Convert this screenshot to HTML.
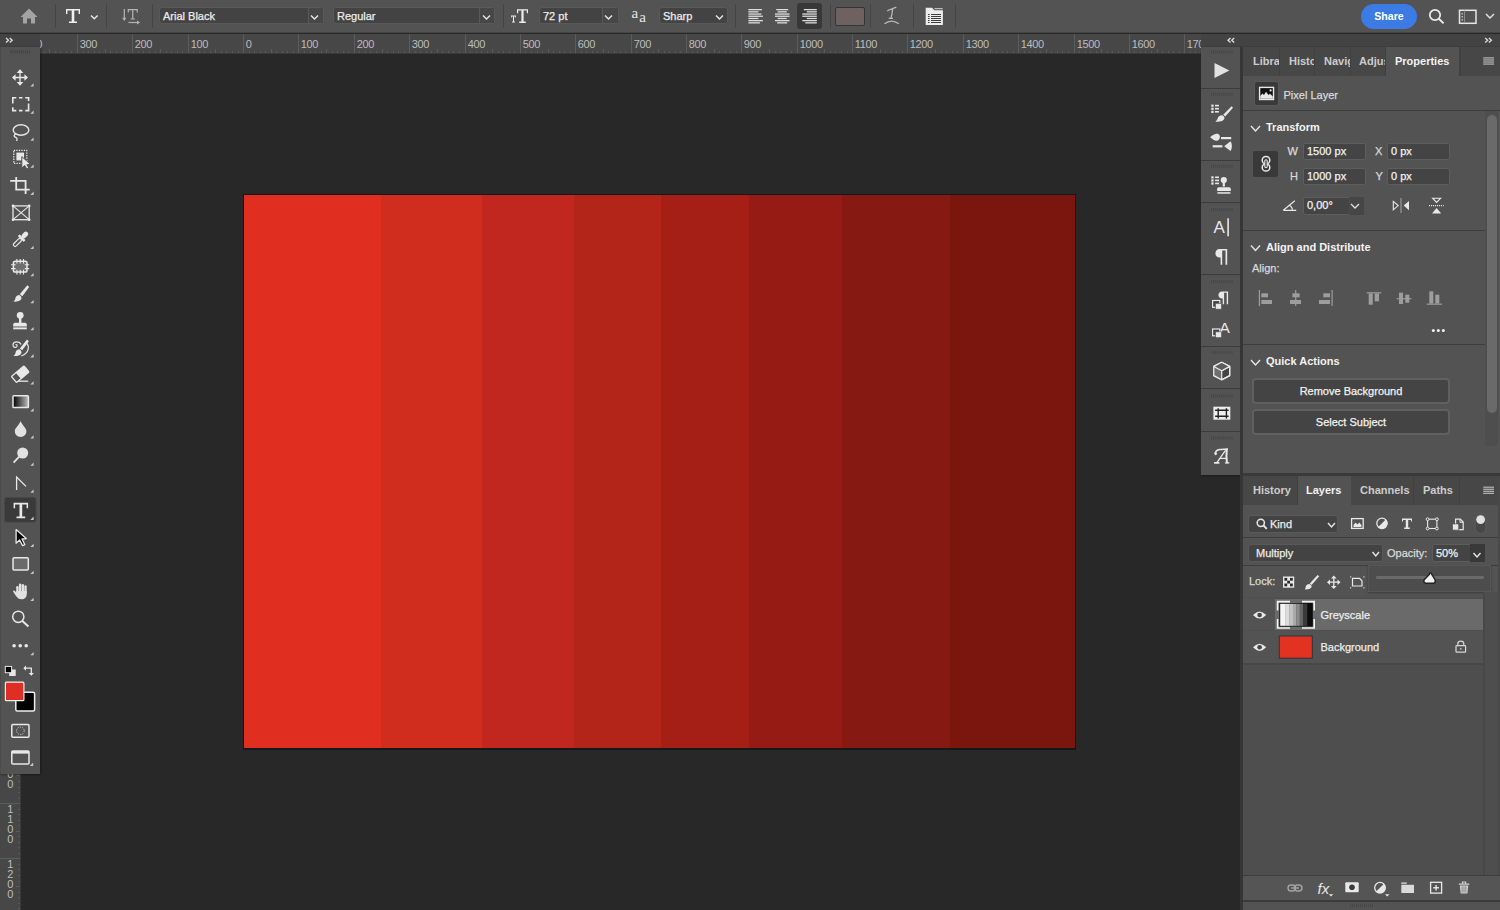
<!DOCTYPE html>
<html><head><meta charset="utf-8">
<style>
*{box-sizing:border-box;margin:0;padding:0}
html,body{width:1500px;height:910px;overflow:hidden;background:#282828;font-family:"Liberation Sans",sans-serif;color:#e6e6e6}
.a{position:absolute}
#top{left:0;top:0;width:1500px;height:33px;background:#535353;border-bottom:1px solid #444}
.sep{position:absolute;top:4px;width:1px;height:24px;background:#444}
.dd{position:absolute;top:7px;height:17px;background:#434343;border:1px solid #595959;border-radius:3px;font-size:11px;line-height:16px;padding-left:3px;color:#ececec}
.dd .chev{position:absolute;top:0;right:0;height:15px;border-left:1px solid #595959;background:#474747}
svg{display:block}
.dd,.lbl,.inp,.btn{-webkit-text-stroke:0.25px currentColor}
.rt text{font-size:11px;letter-spacing:-0.4px;fill:#bdbdbd;font-family:"Liberation Sans",sans-serif}
#hdrL{left:0;top:34px;width:40px;height:13px;background:#434343;border-bottom:1px solid #3e3e3e}
#tools{left:0;top:47px;width:40px;height:727px;background:#535353;box-shadow:1px 1px 2px rgba(0,0,0,.35);border-left:1px solid #4b4b4b}
#dockhdr{left:1201px;top:34px;width:299px;height:13px;background:#434343;border-bottom:1px solid #3e3e3e}
#dock{left:1201px;top:47px;width:40px;height:428px;background:#535353;box-shadow:1px 1px 2px rgba(0,0,0,.35)}
.dg{position:absolute;left:0;width:40px;border-bottom:1px solid #3c3c3c}
#pleft{left:1240px;top:47px;width:3px;height:863px;background:#363636}
#props{left:1243px;top:47px;width:257px;height:426px;background:#535353}
#layers{left:1243px;top:476px;width:257px;height:434px;background:#535353}
.tabs{position:absolute;left:0;top:0;width:257px;height:29px;background:#464646}
.tab{position:absolute;top:0;height:29px;font-size:11px;font-weight:bold;line-height:29px;color:#cccccc;overflow:hidden;white-space:nowrap;border-right:1px solid #404040}
.tab.on{background:#535353;color:#f2f2f2;border-right:none}
.hl{position:absolute;left:0;width:257px;height:1px;background:#3d3d3d}
.sec{position:absolute;left:23px;font-size:11px;font-weight:bold;color:#f2f2f2}
.lbl{position:absolute;font-size:11px;color:#dadada}
.inp{position:absolute;height:17px;background:#444444;border:1px solid #5d5d5d;border-radius:2px;font-size:11px;line-height:15px;padding-left:3px;color:#f2f2f2}
.btn{position:absolute;left:10px;width:198px;height:26px;background:#444444;border:2px solid #606060;border-radius:4px;font-size:11px;line-height:22px;text-align:center;color:#f2f2f2}
</style></head><body>

<!-- canvas area -->
<div class="a" style="left:243px;top:194px;width:833px;height:556px;background:#13191b"></div>
<div style="position:absolute;left:244px;top:195px;width:137px;height:553px;background:#e02f20"></div><div style="position:absolute;left:381px;top:195px;width:101px;height:553px;background:#d12d1e"></div><div style="position:absolute;left:482px;top:195px;width:92px;height:553px;background:#c1261f"></div><div style="position:absolute;left:574px;top:195px;width:87px;height:553px;background:#b32419"></div><div style="position:absolute;left:661px;top:195px;width:88px;height:553px;background:#a61f16"></div><div style="position:absolute;left:749px;top:195px;width:93px;height:553px;background:#951b14"></div><div style="position:absolute;left:842px;top:195px;width:108px;height:553px;background:#861912"></div><div style="position:absolute;left:950px;top:195px;width:125px;height:553px;background:#7b160e"></div>

<!-- rulers -->
<div class="a" style="left:0;top:34px;width:1201px;height:19px;background:#474747"></div>
<div class="a" style="left:0;top:53px;width:20px;height:857px;background:#474747"></div>
<div class="a" style="left:20px;top:53px;width:1px;height:857px;background:#3a3a3a"></div>
<div class="a" style="left:0;top:53px;width:1201px;height:1px;background:#3a3a3a"></div>
<svg class="a rt" style="left:0;top:0" width="1201" height="910"><rect x="0" y="51" width="1" height="2" fill="#595959"/><rect x="5" y="51" width="1" height="2" fill="#595959"/><rect x="11" y="51" width="1" height="2" fill="#595959"/><rect x="16" y="51" width="1" height="2" fill="#595959"/><rect x="22" y="34" width="1" height="19" fill="#5c5c5c"/><text x="24.8" y="47.8">400</text><rect x="27" y="51" width="1" height="2" fill="#595959"/><rect x="33" y="51" width="1" height="2" fill="#595959"/><rect x="38" y="51" width="1" height="2" fill="#595959"/><rect x="44" y="51" width="1" height="2" fill="#595959"/><rect x="49" y="49" width="1" height="4" fill="#5a5a5a"/><rect x="55" y="51" width="1" height="2" fill="#595959"/><rect x="60" y="51" width="1" height="2" fill="#595959"/><rect x="66" y="51" width="1" height="2" fill="#595959"/><rect x="71" y="51" width="1" height="2" fill="#595959"/><rect x="77" y="34" width="1" height="19" fill="#5c5c5c"/><text x="79.8" y="47.8">300</text><rect x="83" y="51" width="1" height="2" fill="#595959"/><rect x="88" y="51" width="1" height="2" fill="#595959"/><rect x="94" y="51" width="1" height="2" fill="#595959"/><rect x="99" y="51" width="1" height="2" fill="#595959"/><rect x="105" y="49" width="1" height="4" fill="#5a5a5a"/><rect x="110" y="51" width="1" height="2" fill="#595959"/><rect x="116" y="51" width="1" height="2" fill="#595959"/><rect x="121" y="51" width="1" height="2" fill="#595959"/><rect x="127" y="51" width="1" height="2" fill="#595959"/><rect x="132" y="34" width="1" height="19" fill="#5c5c5c"/><text x="134.8" y="47.8">200</text><rect x="138" y="51" width="1" height="2" fill="#595959"/><rect x="143" y="51" width="1" height="2" fill="#595959"/><rect x="149" y="51" width="1" height="2" fill="#595959"/><rect x="155" y="51" width="1" height="2" fill="#595959"/><rect x="160" y="49" width="1" height="4" fill="#5a5a5a"/><rect x="166" y="51" width="1" height="2" fill="#595959"/><rect x="171" y="51" width="1" height="2" fill="#595959"/><rect x="177" y="51" width="1" height="2" fill="#595959"/><rect x="182" y="51" width="1" height="2" fill="#595959"/><rect x="188" y="34" width="1" height="19" fill="#5c5c5c"/><text x="190.8" y="47.8">100</text><rect x="193" y="51" width="1" height="2" fill="#595959"/><rect x="199" y="51" width="1" height="2" fill="#595959"/><rect x="204" y="51" width="1" height="2" fill="#595959"/><rect x="210" y="51" width="1" height="2" fill="#595959"/><rect x="215" y="49" width="1" height="4" fill="#5a5a5a"/><rect x="221" y="51" width="1" height="2" fill="#595959"/><rect x="226" y="51" width="1" height="2" fill="#595959"/><rect x="232" y="51" width="1" height="2" fill="#595959"/><rect x="238" y="51" width="1" height="2" fill="#595959"/><rect x="243" y="34" width="1" height="19" fill="#5c5c5c"/><text x="245.8" y="47.8">0</text><rect x="249" y="51" width="1" height="2" fill="#595959"/><rect x="254" y="51" width="1" height="2" fill="#595959"/><rect x="260" y="51" width="1" height="2" fill="#595959"/><rect x="265" y="51" width="1" height="2" fill="#595959"/><rect x="271" y="49" width="1" height="4" fill="#5a5a5a"/><rect x="276" y="51" width="1" height="2" fill="#595959"/><rect x="282" y="51" width="1" height="2" fill="#595959"/><rect x="287" y="51" width="1" height="2" fill="#595959"/><rect x="293" y="51" width="1" height="2" fill="#595959"/><rect x="298" y="34" width="1" height="19" fill="#5c5c5c"/><text x="300.8" y="47.8">100</text><rect x="304" y="51" width="1" height="2" fill="#595959"/><rect x="310" y="51" width="1" height="2" fill="#595959"/><rect x="315" y="51" width="1" height="2" fill="#595959"/><rect x="321" y="51" width="1" height="2" fill="#595959"/><rect x="326" y="49" width="1" height="4" fill="#5a5a5a"/><rect x="332" y="51" width="1" height="2" fill="#595959"/><rect x="337" y="51" width="1" height="2" fill="#595959"/><rect x="343" y="51" width="1" height="2" fill="#595959"/><rect x="348" y="51" width="1" height="2" fill="#595959"/><rect x="354" y="34" width="1" height="19" fill="#5c5c5c"/><text x="356.8" y="47.8">200</text><rect x="359" y="51" width="1" height="2" fill="#595959"/><rect x="365" y="51" width="1" height="2" fill="#595959"/><rect x="370" y="51" width="1" height="2" fill="#595959"/><rect x="376" y="51" width="1" height="2" fill="#595959"/><rect x="382" y="49" width="1" height="4" fill="#5a5a5a"/><rect x="387" y="51" width="1" height="2" fill="#595959"/><rect x="393" y="51" width="1" height="2" fill="#595959"/><rect x="398" y="51" width="1" height="2" fill="#595959"/><rect x="404" y="51" width="1" height="2" fill="#595959"/><rect x="409" y="34" width="1" height="19" fill="#5c5c5c"/><text x="411.8" y="47.8">300</text><rect x="415" y="51" width="1" height="2" fill="#595959"/><rect x="420" y="51" width="1" height="2" fill="#595959"/><rect x="426" y="51" width="1" height="2" fill="#595959"/><rect x="431" y="51" width="1" height="2" fill="#595959"/><rect x="437" y="49" width="1" height="4" fill="#5a5a5a"/><rect x="442" y="51" width="1" height="2" fill="#595959"/><rect x="448" y="51" width="1" height="2" fill="#595959"/><rect x="453" y="51" width="1" height="2" fill="#595959"/><rect x="459" y="51" width="1" height="2" fill="#595959"/><rect x="465" y="34" width="1" height="19" fill="#5c5c5c"/><text x="467.8" y="47.8">400</text><rect x="470" y="51" width="1" height="2" fill="#595959"/><rect x="476" y="51" width="1" height="2" fill="#595959"/><rect x="481" y="51" width="1" height="2" fill="#595959"/><rect x="487" y="51" width="1" height="2" fill="#595959"/><rect x="492" y="49" width="1" height="4" fill="#5a5a5a"/><rect x="498" y="51" width="1" height="2" fill="#595959"/><rect x="503" y="51" width="1" height="2" fill="#595959"/><rect x="509" y="51" width="1" height="2" fill="#595959"/><rect x="514" y="51" width="1" height="2" fill="#595959"/><rect x="520" y="34" width="1" height="19" fill="#5c5c5c"/><text x="522.8" y="47.8">500</text><rect x="525" y="51" width="1" height="2" fill="#595959"/><rect x="531" y="51" width="1" height="2" fill="#595959"/><rect x="537" y="51" width="1" height="2" fill="#595959"/><rect x="542" y="51" width="1" height="2" fill="#595959"/><rect x="548" y="49" width="1" height="4" fill="#5a5a5a"/><rect x="553" y="51" width="1" height="2" fill="#595959"/><rect x="559" y="51" width="1" height="2" fill="#595959"/><rect x="564" y="51" width="1" height="2" fill="#595959"/><rect x="570" y="51" width="1" height="2" fill="#595959"/><rect x="575" y="34" width="1" height="19" fill="#5c5c5c"/><text x="577.8" y="47.8">600</text><rect x="581" y="51" width="1" height="2" fill="#595959"/><rect x="586" y="51" width="1" height="2" fill="#595959"/><rect x="592" y="51" width="1" height="2" fill="#595959"/><rect x="597" y="51" width="1" height="2" fill="#595959"/><rect x="603" y="49" width="1" height="4" fill="#5a5a5a"/><rect x="608" y="51" width="1" height="2" fill="#595959"/><rect x="614" y="51" width="1" height="2" fill="#595959"/><rect x="620" y="51" width="1" height="2" fill="#595959"/><rect x="625" y="51" width="1" height="2" fill="#595959"/><rect x="631" y="34" width="1" height="19" fill="#5c5c5c"/><text x="633.8" y="47.8">700</text><rect x="636" y="51" width="1" height="2" fill="#595959"/><rect x="642" y="51" width="1" height="2" fill="#595959"/><rect x="647" y="51" width="1" height="2" fill="#595959"/><rect x="653" y="51" width="1" height="2" fill="#595959"/><rect x="658" y="49" width="1" height="4" fill="#5a5a5a"/><rect x="664" y="51" width="1" height="2" fill="#595959"/><rect x="669" y="51" width="1" height="2" fill="#595959"/><rect x="675" y="51" width="1" height="2" fill="#595959"/><rect x="680" y="51" width="1" height="2" fill="#595959"/><rect x="686" y="34" width="1" height="19" fill="#5c5c5c"/><text x="688.8" y="47.8">800</text><rect x="692" y="51" width="1" height="2" fill="#595959"/><rect x="697" y="51" width="1" height="2" fill="#595959"/><rect x="703" y="51" width="1" height="2" fill="#595959"/><rect x="708" y="51" width="1" height="2" fill="#595959"/><rect x="714" y="49" width="1" height="4" fill="#5a5a5a"/><rect x="719" y="51" width="1" height="2" fill="#595959"/><rect x="725" y="51" width="1" height="2" fill="#595959"/><rect x="730" y="51" width="1" height="2" fill="#595959"/><rect x="736" y="51" width="1" height="2" fill="#595959"/><rect x="741" y="34" width="1" height="19" fill="#5c5c5c"/><text x="743.8" y="47.8">900</text><rect x="747" y="51" width="1" height="2" fill="#595959"/><rect x="752" y="51" width="1" height="2" fill="#595959"/><rect x="758" y="51" width="1" height="2" fill="#595959"/><rect x="763" y="51" width="1" height="2" fill="#595959"/><rect x="769" y="49" width="1" height="4" fill="#5a5a5a"/><rect x="775" y="51" width="1" height="2" fill="#595959"/><rect x="780" y="51" width="1" height="2" fill="#595959"/><rect x="786" y="51" width="1" height="2" fill="#595959"/><rect x="791" y="51" width="1" height="2" fill="#595959"/><rect x="797" y="34" width="1" height="19" fill="#5c5c5c"/><text x="799.8" y="47.8">1000</text><rect x="802" y="51" width="1" height="2" fill="#595959"/><rect x="808" y="51" width="1" height="2" fill="#595959"/><rect x="813" y="51" width="1" height="2" fill="#595959"/><rect x="819" y="51" width="1" height="2" fill="#595959"/><rect x="824" y="49" width="1" height="4" fill="#5a5a5a"/><rect x="830" y="51" width="1" height="2" fill="#595959"/><rect x="835" y="51" width="1" height="2" fill="#595959"/><rect x="841" y="51" width="1" height="2" fill="#595959"/><rect x="847" y="51" width="1" height="2" fill="#595959"/><rect x="852" y="34" width="1" height="19" fill="#5c5c5c"/><text x="854.8" y="47.8">1100</text><rect x="858" y="51" width="1" height="2" fill="#595959"/><rect x="863" y="51" width="1" height="2" fill="#595959"/><rect x="869" y="51" width="1" height="2" fill="#595959"/><rect x="874" y="51" width="1" height="2" fill="#595959"/><rect x="880" y="49" width="1" height="4" fill="#5a5a5a"/><rect x="885" y="51" width="1" height="2" fill="#595959"/><rect x="891" y="51" width="1" height="2" fill="#595959"/><rect x="896" y="51" width="1" height="2" fill="#595959"/><rect x="902" y="51" width="1" height="2" fill="#595959"/><rect x="907" y="34" width="1" height="19" fill="#5c5c5c"/><text x="909.8" y="47.8">1200</text><rect x="913" y="51" width="1" height="2" fill="#595959"/><rect x="918" y="51" width="1" height="2" fill="#595959"/><rect x="924" y="51" width="1" height="2" fill="#595959"/><rect x="930" y="51" width="1" height="2" fill="#595959"/><rect x="935" y="49" width="1" height="4" fill="#5a5a5a"/><rect x="941" y="51" width="1" height="2" fill="#595959"/><rect x="946" y="51" width="1" height="2" fill="#595959"/><rect x="952" y="51" width="1" height="2" fill="#595959"/><rect x="957" y="51" width="1" height="2" fill="#595959"/><rect x="963" y="34" width="1" height="19" fill="#5c5c5c"/><text x="965.8" y="47.8">1300</text><rect x="968" y="51" width="1" height="2" fill="#595959"/><rect x="974" y="51" width="1" height="2" fill="#595959"/><rect x="979" y="51" width="1" height="2" fill="#595959"/><rect x="985" y="51" width="1" height="2" fill="#595959"/><rect x="990" y="49" width="1" height="4" fill="#5a5a5a"/><rect x="996" y="51" width="1" height="2" fill="#595959"/><rect x="1002" y="51" width="1" height="2" fill="#595959"/><rect x="1007" y="51" width="1" height="2" fill="#595959"/><rect x="1013" y="51" width="1" height="2" fill="#595959"/><rect x="1018" y="34" width="1" height="19" fill="#5c5c5c"/><text x="1020.8" y="47.8">1400</text><rect x="1024" y="51" width="1" height="2" fill="#595959"/><rect x="1029" y="51" width="1" height="2" fill="#595959"/><rect x="1035" y="51" width="1" height="2" fill="#595959"/><rect x="1040" y="51" width="1" height="2" fill="#595959"/><rect x="1046" y="49" width="1" height="4" fill="#5a5a5a"/><rect x="1051" y="51" width="1" height="2" fill="#595959"/><rect x="1057" y="51" width="1" height="2" fill="#595959"/><rect x="1062" y="51" width="1" height="2" fill="#595959"/><rect x="1068" y="51" width="1" height="2" fill="#595959"/><rect x="1074" y="34" width="1" height="19" fill="#5c5c5c"/><text x="1076.8" y="47.8">1500</text><rect x="1079" y="51" width="1" height="2" fill="#595959"/><rect x="1085" y="51" width="1" height="2" fill="#595959"/><rect x="1090" y="51" width="1" height="2" fill="#595959"/><rect x="1096" y="51" width="1" height="2" fill="#595959"/><rect x="1101" y="49" width="1" height="4" fill="#5a5a5a"/><rect x="1107" y="51" width="1" height="2" fill="#595959"/><rect x="1112" y="51" width="1" height="2" fill="#595959"/><rect x="1118" y="51" width="1" height="2" fill="#595959"/><rect x="1123" y="51" width="1" height="2" fill="#595959"/><rect x="1129" y="34" width="1" height="19" fill="#5c5c5c"/><text x="1131.8" y="47.8">1600</text><rect x="1134" y="51" width="1" height="2" fill="#595959"/><rect x="1140" y="51" width="1" height="2" fill="#595959"/><rect x="1145" y="51" width="1" height="2" fill="#595959"/><rect x="1151" y="51" width="1" height="2" fill="#595959"/><rect x="1157" y="49" width="1" height="4" fill="#5a5a5a"/><rect x="1162" y="51" width="1" height="2" fill="#595959"/><rect x="1168" y="51" width="1" height="2" fill="#595959"/><rect x="1173" y="51" width="1" height="2" fill="#595959"/><rect x="1179" y="51" width="1" height="2" fill="#595959"/><rect x="1184" y="34" width="1" height="19" fill="#5c5c5c"/><text x="1186.8" y="47.8">1700</text><rect x="1190" y="51" width="1" height="2" fill="#595959"/><rect x="1195" y="51" width="1" height="2" fill="#595959"/><rect x="18" y="51" width="2" height="1" fill="#575757"/><rect x="16" y="57" width="4" height="1" fill="#5a5a5a"/><rect x="18" y="62" width="2" height="1" fill="#575757"/><rect x="18" y="68" width="2" height="1" fill="#575757"/><rect x="18" y="73" width="2" height="1" fill="#575757"/><rect x="18" y="79" width="2" height="1" fill="#575757"/><rect x="0" y="84" width="20" height="1" fill="#5c5c5c"/><text x="10" y="93.5" text-anchor="middle">2</text><text x="10" y="103.5" text-anchor="middle">0</text><text x="10" y="113.5" text-anchor="middle">0</text><rect x="18" y="90" width="2" height="1" fill="#575757"/><rect x="18" y="95" width="2" height="1" fill="#575757"/><rect x="18" y="101" width="2" height="1" fill="#575757"/><rect x="18" y="106" width="2" height="1" fill="#575757"/><rect x="16" y="112" width="4" height="1" fill="#5a5a5a"/><rect x="18" y="117" width="2" height="1" fill="#575757"/><rect x="18" y="123" width="2" height="1" fill="#575757"/><rect x="18" y="128" width="2" height="1" fill="#575757"/><rect x="18" y="134" width="2" height="1" fill="#575757"/><rect x="0" y="140" width="20" height="1" fill="#5c5c5c"/><text x="10" y="149.5" text-anchor="middle">1</text><text x="10" y="159.5" text-anchor="middle">0</text><text x="10" y="169.5" text-anchor="middle">0</text><rect x="18" y="145" width="2" height="1" fill="#575757"/><rect x="18" y="151" width="2" height="1" fill="#575757"/><rect x="18" y="156" width="2" height="1" fill="#575757"/><rect x="18" y="162" width="2" height="1" fill="#575757"/><rect x="16" y="167" width="4" height="1" fill="#5a5a5a"/><rect x="18" y="173" width="2" height="1" fill="#575757"/><rect x="18" y="178" width="2" height="1" fill="#575757"/><rect x="18" y="184" width="2" height="1" fill="#575757"/><rect x="18" y="189" width="2" height="1" fill="#575757"/><rect x="0" y="195" width="20" height="1" fill="#5c5c5c"/><text x="10" y="204.5" text-anchor="middle">0</text><rect x="18" y="200" width="2" height="1" fill="#575757"/><rect x="18" y="206" width="2" height="1" fill="#575757"/><rect x="18" y="211" width="2" height="1" fill="#575757"/><rect x="18" y="217" width="2" height="1" fill="#575757"/><rect x="16" y="222" width="4" height="1" fill="#5a5a5a"/><rect x="18" y="228" width="2" height="1" fill="#575757"/><rect x="18" y="234" width="2" height="1" fill="#575757"/><rect x="18" y="239" width="2" height="1" fill="#575757"/><rect x="18" y="245" width="2" height="1" fill="#575757"/><rect x="0" y="250" width="20" height="1" fill="#5c5c5c"/><text x="10" y="259.5" text-anchor="middle">1</text><text x="10" y="269.5" text-anchor="middle">0</text><text x="10" y="279.5" text-anchor="middle">0</text><rect x="18" y="256" width="2" height="1" fill="#575757"/><rect x="18" y="261" width="2" height="1" fill="#575757"/><rect x="18" y="267" width="2" height="1" fill="#575757"/><rect x="18" y="272" width="2" height="1" fill="#575757"/><rect x="16" y="278" width="4" height="1" fill="#5a5a5a"/><rect x="18" y="283" width="2" height="1" fill="#575757"/><rect x="18" y="289" width="2" height="1" fill="#575757"/><rect x="18" y="294" width="2" height="1" fill="#575757"/><rect x="18" y="300" width="2" height="1" fill="#575757"/><rect x="0" y="305" width="20" height="1" fill="#5c5c5c"/><text x="10" y="314.5" text-anchor="middle">2</text><text x="10" y="324.5" text-anchor="middle">0</text><text x="10" y="334.5" text-anchor="middle">0</text><rect x="18" y="311" width="2" height="1" fill="#575757"/><rect x="18" y="316" width="2" height="1" fill="#575757"/><rect x="18" y="322" width="2" height="1" fill="#575757"/><rect x="18" y="328" width="2" height="1" fill="#575757"/><rect x="16" y="333" width="4" height="1" fill="#5a5a5a"/><rect x="18" y="339" width="2" height="1" fill="#575757"/><rect x="18" y="344" width="2" height="1" fill="#575757"/><rect x="18" y="350" width="2" height="1" fill="#575757"/><rect x="18" y="355" width="2" height="1" fill="#575757"/><rect x="0" y="361" width="20" height="1" fill="#5c5c5c"/><text x="10" y="370.5" text-anchor="middle">3</text><text x="10" y="380.5" text-anchor="middle">0</text><text x="10" y="390.5" text-anchor="middle">0</text><rect x="18" y="366" width="2" height="1" fill="#575757"/><rect x="18" y="372" width="2" height="1" fill="#575757"/><rect x="18" y="377" width="2" height="1" fill="#575757"/><rect x="18" y="383" width="2" height="1" fill="#575757"/><rect x="16" y="388" width="4" height="1" fill="#5a5a5a"/><rect x="18" y="394" width="2" height="1" fill="#575757"/><rect x="18" y="399" width="2" height="1" fill="#575757"/><rect x="18" y="405" width="2" height="1" fill="#575757"/><rect x="18" y="410" width="2" height="1" fill="#575757"/><rect x="0" y="416" width="20" height="1" fill="#5c5c5c"/><text x="10" y="425.5" text-anchor="middle">4</text><text x="10" y="435.5" text-anchor="middle">0</text><text x="10" y="445.5" text-anchor="middle">0</text><rect x="18" y="422" width="2" height="1" fill="#575757"/><rect x="18" y="427" width="2" height="1" fill="#575757"/><rect x="18" y="433" width="2" height="1" fill="#575757"/><rect x="18" y="438" width="2" height="1" fill="#575757"/><rect x="16" y="444" width="4" height="1" fill="#5a5a5a"/><rect x="18" y="449" width="2" height="1" fill="#575757"/><rect x="18" y="455" width="2" height="1" fill="#575757"/><rect x="18" y="460" width="2" height="1" fill="#575757"/><rect x="18" y="466" width="2" height="1" fill="#575757"/><rect x="0" y="471" width="20" height="1" fill="#5c5c5c"/><text x="10" y="480.5" text-anchor="middle">5</text><text x="10" y="490.5" text-anchor="middle">0</text><text x="10" y="500.5" text-anchor="middle">0</text><rect x="18" y="477" width="2" height="1" fill="#575757"/><rect x="18" y="482" width="2" height="1" fill="#575757"/><rect x="18" y="488" width="2" height="1" fill="#575757"/><rect x="18" y="493" width="2" height="1" fill="#575757"/><rect x="16" y="499" width="4" height="1" fill="#5a5a5a"/><rect x="18" y="504" width="2" height="1" fill="#575757"/><rect x="18" y="510" width="2" height="1" fill="#575757"/><rect x="18" y="516" width="2" height="1" fill="#575757"/><rect x="18" y="521" width="2" height="1" fill="#575757"/><rect x="0" y="527" width="20" height="1" fill="#5c5c5c"/><text x="10" y="536.5" text-anchor="middle">6</text><text x="10" y="546.5" text-anchor="middle">0</text><text x="10" y="556.5" text-anchor="middle">0</text><rect x="18" y="532" width="2" height="1" fill="#575757"/><rect x="18" y="538" width="2" height="1" fill="#575757"/><rect x="18" y="543" width="2" height="1" fill="#575757"/><rect x="18" y="549" width="2" height="1" fill="#575757"/><rect x="16" y="554" width="4" height="1" fill="#5a5a5a"/><rect x="18" y="560" width="2" height="1" fill="#575757"/><rect x="18" y="565" width="2" height="1" fill="#575757"/><rect x="18" y="571" width="2" height="1" fill="#575757"/><rect x="18" y="576" width="2" height="1" fill="#575757"/><rect x="0" y="582" width="20" height="1" fill="#5c5c5c"/><text x="10" y="591.5" text-anchor="middle">7</text><text x="10" y="601.5" text-anchor="middle">0</text><text x="10" y="611.5" text-anchor="middle">0</text><rect x="18" y="587" width="2" height="1" fill="#575757"/><rect x="18" y="593" width="2" height="1" fill="#575757"/><rect x="18" y="598" width="2" height="1" fill="#575757"/><rect x="18" y="604" width="2" height="1" fill="#575757"/><rect x="16" y="610" width="4" height="1" fill="#5a5a5a"/><rect x="18" y="615" width="2" height="1" fill="#575757"/><rect x="18" y="621" width="2" height="1" fill="#575757"/><rect x="18" y="626" width="2" height="1" fill="#575757"/><rect x="18" y="632" width="2" height="1" fill="#575757"/><rect x="0" y="637" width="20" height="1" fill="#5c5c5c"/><text x="10" y="646.5" text-anchor="middle">8</text><text x="10" y="656.5" text-anchor="middle">0</text><text x="10" y="666.5" text-anchor="middle">0</text><rect x="18" y="643" width="2" height="1" fill="#575757"/><rect x="18" y="648" width="2" height="1" fill="#575757"/><rect x="18" y="654" width="2" height="1" fill="#575757"/><rect x="18" y="659" width="2" height="1" fill="#575757"/><rect x="16" y="665" width="4" height="1" fill="#5a5a5a"/><rect x="18" y="670" width="2" height="1" fill="#575757"/><rect x="18" y="676" width="2" height="1" fill="#575757"/><rect x="18" y="681" width="2" height="1" fill="#575757"/><rect x="18" y="687" width="2" height="1" fill="#575757"/><rect x="0" y="692" width="20" height="1" fill="#5c5c5c"/><text x="10" y="701.5" text-anchor="middle">9</text><text x="10" y="711.5" text-anchor="middle">0</text><text x="10" y="721.5" text-anchor="middle">0</text><rect x="18" y="698" width="2" height="1" fill="#575757"/><rect x="18" y="704" width="2" height="1" fill="#575757"/><rect x="18" y="709" width="2" height="1" fill="#575757"/><rect x="18" y="715" width="2" height="1" fill="#575757"/><rect x="16" y="720" width="4" height="1" fill="#5a5a5a"/><rect x="18" y="726" width="2" height="1" fill="#575757"/><rect x="18" y="731" width="2" height="1" fill="#575757"/><rect x="18" y="737" width="2" height="1" fill="#575757"/><rect x="18" y="742" width="2" height="1" fill="#575757"/><rect x="0" y="748" width="20" height="1" fill="#5c5c5c"/><text x="10" y="757.5" text-anchor="middle">1</text><text x="10" y="767.5" text-anchor="middle">0</text><text x="10" y="777.5" text-anchor="middle">0</text><text x="10" y="787.5" text-anchor="middle">0</text><rect x="18" y="753" width="2" height="1" fill="#575757"/><rect x="18" y="759" width="2" height="1" fill="#575757"/><rect x="18" y="764" width="2" height="1" fill="#575757"/><rect x="18" y="770" width="2" height="1" fill="#575757"/><rect x="16" y="775" width="4" height="1" fill="#5a5a5a"/><rect x="18" y="781" width="2" height="1" fill="#575757"/><rect x="18" y="787" width="2" height="1" fill="#575757"/><rect x="18" y="792" width="2" height="1" fill="#575757"/><rect x="18" y="798" width="2" height="1" fill="#575757"/><rect x="0" y="803" width="20" height="1" fill="#5c5c5c"/><text x="10" y="812.5" text-anchor="middle">1</text><text x="10" y="822.5" text-anchor="middle">1</text><text x="10" y="832.5" text-anchor="middle">0</text><text x="10" y="842.5" text-anchor="middle">0</text><rect x="18" y="809" width="2" height="1" fill="#575757"/><rect x="18" y="814" width="2" height="1" fill="#575757"/><rect x="18" y="820" width="2" height="1" fill="#575757"/><rect x="18" y="825" width="2" height="1" fill="#575757"/><rect x="16" y="831" width="4" height="1" fill="#5a5a5a"/><rect x="18" y="836" width="2" height="1" fill="#575757"/><rect x="18" y="842" width="2" height="1" fill="#575757"/><rect x="18" y="847" width="2" height="1" fill="#575757"/><rect x="18" y="853" width="2" height="1" fill="#575757"/><rect x="0" y="858" width="20" height="1" fill="#5c5c5c"/><text x="10" y="867.5" text-anchor="middle">1</text><text x="10" y="877.5" text-anchor="middle">2</text><text x="10" y="887.5" text-anchor="middle">0</text><text x="10" y="897.5" text-anchor="middle">0</text><rect x="18" y="864" width="2" height="1" fill="#575757"/><rect x="18" y="869" width="2" height="1" fill="#575757"/><rect x="18" y="875" width="2" height="1" fill="#575757"/><rect x="18" y="881" width="2" height="1" fill="#575757"/><rect x="16" y="886" width="4" height="1" fill="#5a5a5a"/><rect x="18" y="892" width="2" height="1" fill="#575757"/><rect x="18" y="897" width="2" height="1" fill="#575757"/><rect x="18" y="903" width="2" height="1" fill="#575757"/><rect x="18" y="908" width="2" height="1" fill="#575757"/></svg>

<!-- top options bar -->
<div id="top" class="a">
  <div class="sep" style="left:55px"></div>
  <div class="sep" style="left:106px"></div>
  <div class="sep" style="left:152px"></div>
  <div class="dd" style="left:159px;width:165px">Arial Black<div class="chev" style="width:15px"></div></div>
  <div class="dd" style="left:333px;width:162px">Regular<div class="chev" style="width:15px"></div></div>
  <div class="sep" style="left:503px"></div>
  <div class="dd" style="left:539px;width:80px">72 pt<div class="chev" style="width:16px"></div></div>
  <div class="dd" style="left:659px;width:69px">Sharp</div>
  <div class="sep" style="left:735px"></div>
  <div class="a" style="left:797px;top:3px;width:25px;height:26px;background:#383838;border-radius:3px"></div>
  <div class="sep" style="left:830px"></div>
  <div class="a" style="left:835px;top:7px;width:30px;height:19px;background:#6f6160;border:1.5px solid #353535;border-radius:2px"></div>
  <div class="sep" style="left:870px"></div>
  <div class="sep" style="left:913px"></div>
  <div class="sep" style="left:955px"></div>
  <div class="a" style="left:1361px;top:4px;width:56px;height:25px;background:#3b7be3;border-radius:13px;color:#fff;font-size:10.6px;font-weight:bold;text-align:center;line-height:25px">Share</div>
  <svg class="a" style="left:0;top:0" width="1500" height="33">
    <path d="M29 8.5L20.5 17H23V23.5H27V18.5H31V23.5H35V17H37.5Z" fill="#a3a3a3"/>
    <path d="M66 9H80V14H78.6V10.6H74.3V21.4H77V23H69V21.4H71.7V10.6H67.4V14H66Z" fill="#f0f0f0"/>
    <path d="M91 15.5L94.3 18.8L97.6 15.5" stroke="#e6e6e6" stroke-width="1.5" fill="none"/>
    <g stroke="#b4b4b4" stroke-width="1.2" fill="none"><path d="M124.3 9V20"/><path d="M128.5 22.5H138.5"/><path d="M128.3 12.5V9.6H137.2V12.5M132.75 9.6V19M130.6 19H134.9"/></g>
    <path d="M122.2 17.8L124.3 21L126.4 17.8Z M137 20.4L140 22.5L137 24.6Z" fill="#b4b4b4"/>
    <path d="M517 9.2H528V13.2H526.8V10.6H523.6V21.5H525.8V23H519.2V21.5H521.4V10.6H518.2V13.2H517Z" fill="#ececec"/>
    <path d="M511 15.5H516V17.6H515.3V16.5H514V21.6H515V22.5H512V21.6H513V16.5H511.7V17.6H511Z" fill="#ececec"/>
    <text x="631.4" y="18.3" font-family="Liberation Serif" font-size="15" fill="#e6e6e6">a</text>
    <text x="639.2" y="21.9" font-family="Liberation Serif" font-size="15" fill="#e6e6e6">a</text>
    <path d="M605 15.5L608.5 19L612 15.5" stroke="#e6e6e6" stroke-width="1.4" fill="none"/>
    <path d="M311 15.5L314.5 19L318 15.5" stroke="#e6e6e6" stroke-width="1.4" fill="none"/>
    <path d="M483 15.5L486.5 19L490 15.5" stroke="#e6e6e6" stroke-width="1.4" fill="none"/>
    <path d="M716 15.5L719.5 19L723 15.5" stroke="#e6e6e6" stroke-width="1.4" fill="none"/>
    <g fill="#dcdcdc">
      <rect x="748.4" y="9" width="13.5" height="1.3"/><rect x="748.4" y="11.2" width="10" height="1.3"/><rect x="748.4" y="13.4" width="13" height="1.3"/><rect x="748.4" y="15.6" width="14.5" height="1.3"/><rect x="748.4" y="17.8" width="10" height="1.3"/><rect x="748.4" y="20" width="14.5" height="1.3"/><rect x="748.4" y="22.2" width="11.5" height="1.3"/>
      <rect x="776.2" y="9" width="12" height="1.3"/><rect x="777.7" y="11.2" width="9" height="1.3"/><rect x="775" y="13.4" width="14.5" height="1.3"/><rect x="775" y="15.6" width="14.5" height="1.3"/><rect x="777.7" y="17.8" width="9" height="1.3"/><rect x="775" y="20" width="14.5" height="1.3"/><rect x="777.2" y="22.2" width="10" height="1.3"/>
      <rect x="803.8" y="9" width="13" height="1.3"/><rect x="806.8" y="11.2" width="10" height="1.3"/><rect x="802.3" y="13.4" width="14.5" height="1.3"/><rect x="802.3" y="15.6" width="14.5" height="1.3"/><rect x="806.8" y="17.8" width="10" height="1.3"/><rect x="802.3" y="20" width="14.5" height="1.3"/><rect x="805.3" y="22.2" width="11.5" height="1.3"/>
    </g>
    <path d="M887.3 11.2C888.6 9.2 892.5 9 896.3 7.2M892.6 9C892.3 12.5 891.8 15.5 890.9 18.3M888.7 18.4H893M884.5 23.8Q891.6 18.4 898.8 23.8" stroke="#b8b8b8" stroke-width="1.3" fill="none"/>
    <path d="M925.7 7.7H932L934.3 10.2H942.9V24.9H925.7Z" fill="#ececec"/>
    <rect x="934.5" y="8" width="8.2" height="1.2" fill="#bdbdbd"/>
    <g fill="#3e3e3e"><rect x="928" y="14" width="1.6" height="1"/><rect x="931" y="14" width="10" height="1"/><rect x="928" y="16" width="1.6" height="1"/><rect x="931" y="16" width="10" height="1"/><rect x="928" y="18" width="1.6" height="1"/><rect x="931" y="18" width="10" height="1"/><rect x="928" y="20" width="1.6" height="1"/><rect x="931" y="20" width="10" height="1"/><rect x="928" y="22" width="1.6" height="1"/><rect x="931" y="22" width="10" height="1"/></g>
    <circle cx="1435" cy="15" r="5.2" stroke="#ececec" stroke-width="1.7" fill="none"/>
    <path d="M1438.8 18.8L1443.6 23.4" stroke="#ececec" stroke-width="1.9"/>
    <rect x="1459.5" y="10.3" width="16.5" height="13" stroke="#e6e6e6" stroke-width="1.5" fill="none"/>
    <path d="M1464.5 10.5V23" stroke="#8a8a8a" stroke-width="1"/>
    <g fill="#bdbdbd"><rect x="1461.5" y="13" width="1.5" height="1.5"/><rect x="1461.5" y="16" width="1.5" height="1.5"/><rect x="1461.5" y="19" width="1.5" height="1.5"/></g>
    <path d="M1486 14L1490 18L1494 14" stroke="#e6e6e6" stroke-width="1.4" fill="none"/>
  </svg>
</div>

<div id="hdrL" class="a"></div>
<div id="tools" class="a"></div>
<svg class="a" style="left:0;top:0;z-index:5" width="40" height="780">
<rect x="10.30" y="50.2" width="1.1" height="3.3" fill="#444"/><rect x="12.40" y="50.2" width="1.1" height="3.3" fill="#444"/><rect x="14.50" y="50.2" width="1.1" height="3.3" fill="#444"/><rect x="16.60" y="50.2" width="1.1" height="3.3" fill="#444"/><rect x="18.70" y="50.2" width="1.1" height="3.3" fill="#444"/><rect x="20.80" y="50.2" width="1.1" height="3.3" fill="#444"/><rect x="22.90" y="50.2" width="1.1" height="3.3" fill="#444"/><rect x="25.00" y="50.2" width="1.1" height="3.3" fill="#444"/><rect x="27.10" y="50.2" width="1.1" height="3.3" fill="#444"/><rect x="29.20" y="50.2" width="1.1" height="3.3" fill="#444"/><path d="M33.6 83.3V86.6H30.3Z" fill="#c9c9c9"/><path d="M33.6 110.4V113.7H30.3Z" fill="#c9c9c9"/><path d="M33.6 137.5V140.8H30.3Z" fill="#c9c9c9"/><path d="M33.6 164.5V167.8H30.3Z" fill="#c9c9c9"/><path d="M33.6 191.6V194.9H30.3Z" fill="#c9c9c9"/><path d="M33.6 245.8V249.1H30.3Z" fill="#c9c9c9"/><path d="M33.6 272.9V276.2H30.3Z" fill="#c9c9c9"/><path d="M33.6 299.9V303.2H30.3Z" fill="#c9c9c9"/><path d="M33.6 327.0V330.3H30.3Z" fill="#c9c9c9"/><path d="M33.6 354.1V357.4H30.3Z" fill="#c9c9c9"/><path d="M33.6 381.2V384.5H30.3Z" fill="#c9c9c9"/><path d="M33.6 408.3V411.6H30.3Z" fill="#c9c9c9"/><path d="M33.6 435.3V438.6H30.3Z" fill="#c9c9c9"/><path d="M33.6 462.4V465.7H30.3Z" fill="#c9c9c9"/><path d="M33.6 489.5V492.8H30.3Z" fill="#c9c9c9"/><path d="M33.6 516.6V519.9H30.3Z" fill="#c9c9c9"/><path d="M33.6 543.7V547.0H30.3Z" fill="#c9c9c9"/><path d="M33.6 570.7V574.0H30.3Z" fill="#c9c9c9"/><path d="M33.6 597.8V601.1H30.3Z" fill="#c9c9c9"/><path d="M33.6 652.0V655.3H30.3Z" fill="#c9c9c9"/>
<g fill="#e8e8e8">
<path d="M20 69.3L16.7 72.9H23.3Z M20 85.7L16.7 82.1H23.3Z M12 77.5L15.6 74.2V80.8Z M28 77.5L24.4 74.2V80.8Z"/>
</g>
<path d="M13 77.5H27M20 70.5V84.5" stroke="#e8e8e8" stroke-width="1.3"/>
<g stroke="#e8e8e8" stroke-width="1.6" fill="none">
<path d="M12.8 101V97.7H16.3M19 97.7H22.5M25.2 97.7H28.6V101M28.6 103.6V107.3M28.6 107.3V110.6H25.2M22.5 110.6H19M16.3 110.6H12.8V107.3M12.8 103.6V101"/>
</g>
<ellipse cx="21" cy="130" rx="7.8" ry="5.2" stroke="#e8e8e8" stroke-width="1.4" fill="none"/>
<path d="M15.8 133.8C13.8 134.5 13.6 136.6 15.3 137.2C16.8 137.7 17.6 138.8 16.6 141" stroke="#e8e8e8" stroke-width="1.3" fill="none"/>
<rect x="13.8" y="150.4" width="13" height="13" stroke="#e8e8e8" stroke-width="1.2" stroke-dasharray="1.3 1.2" fill="none"/>
<rect x="16.4" y="152.6" width="7.6" height="7.8" fill="#e8e8e8"/>
<path d="M21.8 156.6V168.2L24.7 165.5L26.8 169L28.8 168L26.9 164.7L30.6 164.4Z" fill="#e8e8e8" stroke="#535353" stroke-width="1"/>
<path d="M10.2 180.8H25.6V194M16.2 176.9V189.6H29.7" stroke="#e8e8e8" stroke-width="1.8" fill="none"/>
<rect x="13" y="205.9" width="16.2" height="13.8" stroke="#e8e8e8" stroke-width="1.3" fill="none"/>
<path d="M13 205.9L29.2 219.7M29.2 205.9L13 219.7" stroke="#e8e8e8" stroke-width="1.1"/>
<g fill="#e8e8e8"><circle cx="13" cy="205.9" r="1.3"/><circle cx="29.2" cy="205.9" r="1.3"/><circle cx="13" cy="219.7" r="1.3"/><circle cx="29.2" cy="219.7" r="1.3"/></g>
<g transform="translate(20.6 239.2) rotate(45)">
<rect x="-1.7" y="-0.5" width="3.4" height="10" rx="1.7" stroke="#e8e8e8" stroke-width="1.2" fill="none"/>
<rect x="-4.2" y="-2.8" width="8.4" height="2.6" rx="0.6" fill="#e8e8e8"/>
<rect x="-2.4" y="-9.8" width="4.8" height="7.5" rx="2.4" fill="#e8e8e8"/>
</g>
<rect x="13.4" y="261.3" width="13.6" height="10.8" rx="1.8" fill="#6e6e6e" stroke="#e8e8e8" stroke-width="1.5"/>
<path d="M16.9 258.9V263.6M20.2 258.9V263.6M23.5 258.9V263.6M16.9 269.8V274.4M20.2 269.8V274.4M23.5 269.8V274.4M11 264.8H15.6M11 268.6H15.6M24.8 264.8H29.2M24.8 268.6H29.2" stroke="#e8e8e8" stroke-width="1.1"/>
<path d="M27.3 285.3L29.2 287.1L22.3 296.2L19.8 294.2Z" fill="#e8e8e8"/>
<path d="M19.3 294.9C17.3 294.9 15.6 296.3 15.4 298.3C15.2 299.8 14.4 300.9 13.2 301.6C16.2 302 19.6 301.4 21 299.6C22 298.2 21.6 296.2 19.3 294.9Z" fill="#e8e8e8"/>
<circle cx="20.2" cy="315.3" r="3.4" fill="#e8e8e8"/>
<rect x="19" y="317.5" width="2.4" height="5.5" fill="#e8e8e8"/>
<path d="M13.2 326.5V324.6Q13.2 322.8 15 322.8H25.2Q26.8 322.8 26.8 324.6V326.5Z" fill="#e8e8e8"/>
<rect x="13.2" y="327.4" width="13.6" height="1.9" fill="#e8e8e8"/>
<path d="M21 344.5C19.8 341.2 13.2 340.8 13 345C12.9 347.6 16.3 348.2 17 346.4C17.6 344.9 16.2 344.2 15.6 345" stroke="#e8e8e8" stroke-width="1.2" fill="none"/>
<path d="M25.5 342.3C30 345.5 29.6 352.8 21.3 356" stroke="#e8e8e8" stroke-width="1.2" fill="none"/>
<path d="M27 339.5L28.9 341.2L22.2 350.3L19.8 348.4Z" fill="#e8e8e8"/>
<path d="M19.4 349.2C17.4 349.2 15.8 350.6 15.6 352.6C15.4 354.1 14.6 355.2 13.4 355.9C16.4 356.3 19.6 355.7 21 353.9C22 352.5 21.6 350.5 19.4 349.2Z" fill="#e8e8e8"/>
<g transform="translate(20.2 374.2) rotate(-40)">
<rect x="-8.2" y="-4" width="16.4" height="8" rx="0.8" stroke="#e8e8e8" stroke-width="1.3" fill="none"/>
<rect x="-2.5" y="-4" width="10.7" height="8" fill="#e8e8e8"/>
</g>
<path d="M18 381.2H28.2" stroke="#e8e8e8" stroke-width="1.3"/>
<defs><linearGradient id="gr" x1="0" x2="1"><stop offset="0" stop-color="#000"/><stop offset="1" stop-color="#bdbdbd"/></linearGradient></defs>
<rect x="13" y="395.8" width="15.4" height="11.8" fill="url(#gr)" stroke="#e8e8e8" stroke-width="1.5" rx="0.8"/>
<path d="M20.6 421C22 425 26.4 428 26.4 431.3C26.4 434.5 23.8 437 20.6 437C17.4 437 14.8 434.5 14.8 431.3C14.8 428 19.2 425 20.6 421Z" fill="#e2e2e2"/>
<circle cx="22.7" cy="453" r="5.5" fill="#e2e2e2"/>
<path d="M19.2 456.6L13.6 462.6" stroke="#e8e8e8" stroke-width="1.7"/>
<path d="M16.6 490V477L26 486.4" stroke="#e8e8e8" stroke-width="1.3" fill="none"/>
<rect x="4.5" y="497.5" width="31.5" height="24.6" rx="2" fill="#3a3a3a" stroke="#474747" stroke-width="1"/>
<path d="M13.6 502.8H28.1V508.2H26.6V504.6H22.2V516.4H25.2V518.2H16.5V516.4H19.5V504.6H15.1V508.2H13.6Z" fill="#e8e8e8"/>
<path d="M33.6 516.6V519.9H30.3Z" fill="#c9c9c9"/>
<path d="M16.1 529.6V543.2L19.6 540L22.6 545.6L24.8 544.6L22 539L26.2 538.6Z" fill="#000" stroke="#e8e8e8" stroke-width="1.3" stroke-linejoin="round"/>
<rect x="13" y="557.8" width="15.3" height="12.3" rx="1" fill="#6a6a6a" stroke="#e8e8e8" stroke-width="1.5"/>
<g fill="#e2e2e2">
<rect x="16.2" y="586" width="2.4" height="9" rx="1.2"/><rect x="18.9" y="583.5" width="2.4" height="10" rx="1.2"/><rect x="21.6" y="584" width="2.4" height="10" rx="1.2"/><rect x="24.3" y="585.3" width="2.4" height="9" rx="1.2"/>
<path d="M16.2 591H26.7V594.5C26.7 597.5 24.5 599.3 21.5 599.3C19 599.3 17.5 598 16 596L13.2 591.8C12.8 591.1 13.6 590.2 14.5 590.8L16.5 592.5Z"/>
</g>
<circle cx="18.3" cy="616.8" r="5.6" stroke="#e8e8e8" stroke-width="1.5" fill="none"/>
<path d="M22.4 620.9L28.4 626.5" stroke="#e8e8e8" stroke-width="2"/>
<g fill="#e8e8e8"><circle cx="14.1" cy="645.7" r="1.8"/><circle cx="20.2" cy="645.7" r="1.8"/><circle cx="26.2" cy="645.7" r="1.8"/></g>
<rect x="9.2" y="669.5" width="6.5" height="6.5" fill="#e6e6e6"/>
<rect x="5.3" y="666.4" width="6.3" height="6.3" fill="#000" stroke="#e6e6e6" stroke-width="1"/>
<path d="M25.5 668.2H31.3V673.5" stroke="#e8e8e8" stroke-width="1.3" fill="none"/>
<path d="M23.3 668.2L26 665.6V670.8Z M31.3 675.8L28.7 673V673H33.9Z" fill="#e8e8e8"/>
<rect x="15.8" y="692.2" width="18.8" height="18.8" rx="1.5" fill="#000" stroke="#ededed" stroke-width="1.5"/>
<rect x="5.4" y="682.2" width="18.5" height="18.5" rx="1" fill="#df2f25" stroke="#f0f0f0" stroke-width="1.2"/>
<rect x="11.8" y="724.4" width="17.2" height="12.8" rx="1" stroke="#e8e8e8" stroke-width="1.5" fill="none"/>
<circle cx="20.4" cy="730.8" r="3.8" stroke="#cfcfcf" stroke-width="1" stroke-dasharray="1.2 1.2" fill="none"/>
<rect x="11.8" y="751" width="17.2" height="13" rx="1" stroke="#e8e8e8" stroke-width="1.5" fill="none"/>
<rect x="11.8" y="751" width="17.2" height="2.6" fill="#e8e8e8"/>
<path d="M33.2 762.6V766H29.8Z" fill="#c9c9c9"/>
</svg>

<div id="dockhdr" class="a"></div>
<div id="dock" class="a">
  <div class="dg" style="top:0;height:42px"></div>
  <div class="dg" style="top:42px;height:72px"></div>
  <div class="dg" style="top:114px;height:42px"></div>
  <div class="dg" style="top:156px;height:72px"></div>
  <div class="dg" style="top:228px;height:72px"></div>
  <div class="dg" style="top:300px;height:42px"></div>
  <div class="dg" style="top:342px;height:43px"></div>
  <div class="dg" style="top:385px;height:43px;border-bottom:none"></div>
</div>
<div id="pleft" class="a"></div>
<svg class="a" style="left:1195px;top:0;z-index:5" width="50" height="480" viewBox="1195 0 50 480">
<rect x="1211.00" y="50.5" width="1" height="3.2" fill="#474747"/><rect x="1213.05" y="50.5" width="1" height="3.2" fill="#474747"/><rect x="1215.10" y="50.5" width="1" height="3.2" fill="#474747"/><rect x="1217.15" y="50.5" width="1" height="3.2" fill="#474747"/><rect x="1219.20" y="50.5" width="1" height="3.2" fill="#474747"/><rect x="1221.25" y="50.5" width="1" height="3.2" fill="#474747"/><rect x="1223.30" y="50.5" width="1" height="3.2" fill="#474747"/><rect x="1225.35" y="50.5" width="1" height="3.2" fill="#474747"/><rect x="1227.40" y="50.5" width="1" height="3.2" fill="#474747"/><rect x="1229.45" y="50.5" width="1" height="3.2" fill="#474747"/><rect x="1231.50" y="50.5" width="1" height="3.2" fill="#474747"/><rect x="1211.00" y="92.6" width="1" height="3.2" fill="#474747"/><rect x="1213.05" y="92.6" width="1" height="3.2" fill="#474747"/><rect x="1215.10" y="92.6" width="1" height="3.2" fill="#474747"/><rect x="1217.15" y="92.6" width="1" height="3.2" fill="#474747"/><rect x="1219.20" y="92.6" width="1" height="3.2" fill="#474747"/><rect x="1221.25" y="92.6" width="1" height="3.2" fill="#474747"/><rect x="1223.30" y="92.6" width="1" height="3.2" fill="#474747"/><rect x="1225.35" y="92.6" width="1" height="3.2" fill="#474747"/><rect x="1227.40" y="92.6" width="1" height="3.2" fill="#474747"/><rect x="1229.45" y="92.6" width="1" height="3.2" fill="#474747"/><rect x="1231.50" y="92.6" width="1" height="3.2" fill="#474747"/><rect x="1211.00" y="164.6" width="1" height="3.2" fill="#474747"/><rect x="1213.05" y="164.6" width="1" height="3.2" fill="#474747"/><rect x="1215.10" y="164.6" width="1" height="3.2" fill="#474747"/><rect x="1217.15" y="164.6" width="1" height="3.2" fill="#474747"/><rect x="1219.20" y="164.6" width="1" height="3.2" fill="#474747"/><rect x="1221.25" y="164.6" width="1" height="3.2" fill="#474747"/><rect x="1223.30" y="164.6" width="1" height="3.2" fill="#474747"/><rect x="1225.35" y="164.6" width="1" height="3.2" fill="#474747"/><rect x="1227.40" y="164.6" width="1" height="3.2" fill="#474747"/><rect x="1229.45" y="164.6" width="1" height="3.2" fill="#474747"/><rect x="1231.50" y="164.6" width="1" height="3.2" fill="#474747"/><rect x="1211.00" y="208" width="1" height="3.2" fill="#474747"/><rect x="1213.05" y="208" width="1" height="3.2" fill="#474747"/><rect x="1215.10" y="208" width="1" height="3.2" fill="#474747"/><rect x="1217.15" y="208" width="1" height="3.2" fill="#474747"/><rect x="1219.20" y="208" width="1" height="3.2" fill="#474747"/><rect x="1221.25" y="208" width="1" height="3.2" fill="#474747"/><rect x="1223.30" y="208" width="1" height="3.2" fill="#474747"/><rect x="1225.35" y="208" width="1" height="3.2" fill="#474747"/><rect x="1227.40" y="208" width="1" height="3.2" fill="#474747"/><rect x="1229.45" y="208" width="1" height="3.2" fill="#474747"/><rect x="1231.50" y="208" width="1" height="3.2" fill="#474747"/><rect x="1211.00" y="280" width="1" height="3.2" fill="#474747"/><rect x="1213.05" y="280" width="1" height="3.2" fill="#474747"/><rect x="1215.10" y="280" width="1" height="3.2" fill="#474747"/><rect x="1217.15" y="280" width="1" height="3.2" fill="#474747"/><rect x="1219.20" y="280" width="1" height="3.2" fill="#474747"/><rect x="1221.25" y="280" width="1" height="3.2" fill="#474747"/><rect x="1223.30" y="280" width="1" height="3.2" fill="#474747"/><rect x="1225.35" y="280" width="1" height="3.2" fill="#474747"/><rect x="1227.40" y="280" width="1" height="3.2" fill="#474747"/><rect x="1229.45" y="280" width="1" height="3.2" fill="#474747"/><rect x="1231.50" y="280" width="1" height="3.2" fill="#474747"/><rect x="1211.00" y="350.8" width="1" height="3.2" fill="#474747"/><rect x="1213.05" y="350.8" width="1" height="3.2" fill="#474747"/><rect x="1215.10" y="350.8" width="1" height="3.2" fill="#474747"/><rect x="1217.15" y="350.8" width="1" height="3.2" fill="#474747"/><rect x="1219.20" y="350.8" width="1" height="3.2" fill="#474747"/><rect x="1221.25" y="350.8" width="1" height="3.2" fill="#474747"/><rect x="1223.30" y="350.8" width="1" height="3.2" fill="#474747"/><rect x="1225.35" y="350.8" width="1" height="3.2" fill="#474747"/><rect x="1227.40" y="350.8" width="1" height="3.2" fill="#474747"/><rect x="1229.45" y="350.8" width="1" height="3.2" fill="#474747"/><rect x="1231.50" y="350.8" width="1" height="3.2" fill="#474747"/><rect x="1211.00" y="394.5" width="1" height="3.2" fill="#474747"/><rect x="1213.05" y="394.5" width="1" height="3.2" fill="#474747"/><rect x="1215.10" y="394.5" width="1" height="3.2" fill="#474747"/><rect x="1217.15" y="394.5" width="1" height="3.2" fill="#474747"/><rect x="1219.20" y="394.5" width="1" height="3.2" fill="#474747"/><rect x="1221.25" y="394.5" width="1" height="3.2" fill="#474747"/><rect x="1223.30" y="394.5" width="1" height="3.2" fill="#474747"/><rect x="1225.35" y="394.5" width="1" height="3.2" fill="#474747"/><rect x="1227.40" y="394.5" width="1" height="3.2" fill="#474747"/><rect x="1229.45" y="394.5" width="1" height="3.2" fill="#474747"/><rect x="1231.50" y="394.5" width="1" height="3.2" fill="#474747"/><rect x="1211.00" y="436.4" width="1" height="3.2" fill="#474747"/><rect x="1213.05" y="436.4" width="1" height="3.2" fill="#474747"/><rect x="1215.10" y="436.4" width="1" height="3.2" fill="#474747"/><rect x="1217.15" y="436.4" width="1" height="3.2" fill="#474747"/><rect x="1219.20" y="436.4" width="1" height="3.2" fill="#474747"/><rect x="1221.25" y="436.4" width="1" height="3.2" fill="#474747"/><rect x="1223.30" y="436.4" width="1" height="3.2" fill="#474747"/><rect x="1225.35" y="436.4" width="1" height="3.2" fill="#474747"/><rect x="1227.40" y="436.4" width="1" height="3.2" fill="#474747"/><rect x="1229.45" y="436.4" width="1" height="3.2" fill="#474747"/><rect x="1231.50" y="436.4" width="1" height="3.2" fill="#474747"/>
<path d="M1214.5 63V78L1229.4 70.5Z" fill="#e2e2e2"/>
<g fill="#e8e8e8">
<rect x="1211.3" y="104.6" width="2.3" height="2.2"/><rect x="1211.3" y="107.7" width="2.3" height="2.2"/><rect x="1211.3" y="110.8" width="2.3" height="2.2"/>
<rect x="1215" y="104.8" width="3.9" height="1.6"/><rect x="1215" y="107.9" width="3.9" height="1.6"/><rect x="1215" y="111" width="3.9" height="1.6"/>
<path d="M1231.6 106.3L1233 107.7L1225.2 116.5L1223.2 114.7Z"/>
<path d="M1222.3 115.2C1220 115 1218 116.5 1217.6 118.6C1217.3 120 1216.4 121 1215.2 121.6C1218.5 122.2 1222.3 121.6 1223.9 119.6C1225 118.2 1224.6 116.3 1222.3 115.2Z"/>
<path d="M1210.1 137.3C1213 134.5 1216.5 133 1218.6 134.2C1220.5 135.3 1220.3 139 1218 140.4C1215.8 141.6 1212.8 139.6 1210.1 137.3Z"/>
<rect x="1221" y="137" width="10.2" height="2.2"/>
<rect x="1212.7" y="145.2" width="9.7" height="2.2"/>
<path d="M1224.2 146.2L1230.5 141.3C1232.3 143.5 1232.3 148.8 1230.5 151Z"/>
<rect x="1211.3" y="176.3" width="2.3" height="2.2"/><rect x="1211.3" y="179.4" width="2.3" height="2.2"/><rect x="1211.3" y="182.4" width="2.3" height="2.2"/>
<rect x="1215.1" y="176.5" width="3.9" height="1.6"/><rect x="1215.1" y="179.6" width="3.9" height="1.6"/><rect x="1215.1" y="182.6" width="3.9" height="1.6"/>
<circle cx="1223.8" cy="180" r="3.1"/><rect x="1222.7" y="182" width="2.2" height="4.5"/>
<path d="M1217.1 191V188.8Q1217.1 187.2 1218.8 187.2H1229Q1230.8 187.2 1230.8 188.8V191Z"/>
<rect x="1217.4" y="192.2" width="13" height="1.5"/>
</g>
<text x="1213.6" y="233.3" font-family="Liberation Sans" font-size="17" fill="#e8e8e8">A</text>
<rect x="1227.3" y="218.3" width="1.6" height="18" fill="#e8e8e8"/>
<path d="M1227.2 249H1219.5C1217 249 1215.4 251 1215.4 253.3C1215.4 255.6 1217 257.5 1219.5 257.5H1220.6V264.8H1222.2V250.6H1225.5V264.8H1227.2Z" fill="#e8e8e8"/>
<path d="M1228.1 291.4H1221.9C1219.9 291.4 1218.4 293 1218.4 294.9C1218.4 296.8 1219.9 298.4 1221.9 298.4H1222.7V304.2H1224.1V292.8H1226.7V304.2H1228.1Z" fill="#e8e8e8"/>
<rect x="1212.6" y="300.5" width="7.2" height="6.8" fill="#444" stroke="#e8e8e8" stroke-width="1.2"/>
<rect x="1215.4" y="303.3" width="6.2" height="5.9" fill="#e8e8e8" stroke="#535353" stroke-width="0.7"/>
<text x="1219.5" y="332.8" font-family="Liberation Sans" font-size="15.5" fill="#e8e8e8">A</text>
<rect x="1212.6" y="329" width="7.2" height="6.8" fill="#444" stroke="#e8e8e8" stroke-width="1.2"/>
<rect x="1215.4" y="331.8" width="6.2" height="5.9" fill="#e8e8e8" stroke="#535353" stroke-width="0.7"/>
<path d="M1221.7 362.3L1229.7 366.4V375.6L1221.7 379.8L1213.8 375.6V366.4Z" fill="#444" stroke="#e8e8e8" stroke-width="1.3" stroke-linejoin="round"/>
<path d="M1213.8 366.4L1221.7 370.8L1229.7 366.4" fill="none" stroke="#e8e8e8" stroke-width="1.1"/>
<path d="M1221.7 362.3L1229.7 366.4L1221.7 370.8L1213.8 366.4Z" fill="#5c5c5c"/>
<path d="M1213.8 366.4L1221.7 370.8V379.8L1213.8 375.6Z" fill="#6e6e6e"/>
<path d="M1221.7 362.3L1229.7 366.4V375.6L1221.7 379.8L1213.8 375.6V366.4ZM1213.8 366.4L1221.7 370.8L1229.7 366.4M1221.7 370.8V379.8" fill="none" stroke="#e8e8e8" stroke-width="1.2" stroke-linejoin="round"/>
<rect x="1213.4" y="406.7" width="16.9" height="13" fill="#ededed"/>
<path d="M1218.2 408.3V418.6M1226.4 408.3V418.6M1215.1 410.3H1228.6M1215.1 416.3H1228.6" stroke="#222" stroke-width="1.4" fill="none"/>
<g stroke="#e8e8e8" fill="none" stroke-linecap="round">
<path d="M1215.6 454.4C1214.7 452.4 1216 450.3 1219.5 449.6C1222 449.2 1224.5 449.3 1227.3 449.1" stroke-width="1.5"/>
<path d="M1226.8 449.6C1226.3 453.5 1226.2 458 1226.9 462.6" stroke-width="2"/>
<path d="M1225.6 462.9H1228.8" stroke-width="1.4"/>
<path d="M1225.3 450.6C1222.5 454.5 1219.5 459 1216.9 462.6" stroke-width="1.3"/>
<path d="M1214.7 462.9H1218.8" stroke-width="1.6"/>
<path d="M1220.2 458.3H1226" stroke-width="1.2"/>
</g>
<circle cx="1215.7" cy="453.6" r="1.3" fill="#e8e8e8"/>
</svg>

<!-- properties panel -->
<div id="props" class="a"></div>
<div class="a" style="left:1243px;top:47px;width:257px;height:29px;background:#474747"></div>
<div class="a" style="left:1243px;top:46px;width:257px;height:1px;background:#3d3d3d"></div>
<div class="tab" style="left:1243px;width:37px;padding-left:10px;top:47px">Libraries</div>
<div class="tab" style="left:1280px;width:35px;padding-left:9px;top:47px">History</div>
<div class="tab" style="left:1315px;width:36px;padding-left:9px;top:47px">Navigator</div>
<div class="tab" style="left:1351px;width:35px;padding-left:8px;top:47px">Adjustments</div>
<div class="tab on" style="left:1386px;width:73px;padding-left:9px;top:47px">Properties</div>
<div class="a" style="left:1459px;top:47px;width:2px;height:29px;background:#414141"></div>
<div class="a" style="left:1255px;top:82px;width:23px;height:23px;background:#393939;border-radius:2px;box-shadow:0 0 0 1px #595959"></div>
<div class="lbl" style="left:1283.5px;top:88.7px">Pixel Layer</div>
<div class="hl" style="left:1243px;top:110px"></div>
<div class="sec" style="left:1266px;top:121px">Transform</div>
<div class="a" style="left:1253px;top:151px;width:25px;height:26px;background:#393939;border-radius:2px"></div>
<div class="lbl" style="left:1287.5px;top:145px">W</div>
<div class="lbl" style="left:1290px;top:170px">H</div>
<div class="inp" style="left:1303px;top:143px;width:63px">1500 px</div>
<div class="inp" style="left:1303px;top:168px;width:63px">1000 px</div>
<div class="lbl" style="left:1375px;top:145px">X</div>
<div class="lbl" style="left:1375.5px;top:170px">Y</div>
<div class="inp" style="left:1387px;top:143px;width:63px">0 px</div>
<div class="inp" style="left:1387px;top:168px;width:63px">0 px</div>
<div class="inp" style="left:1303px;top:197px;width:61px;height:18px">0,00°<div class="a" style="left:45px;top:-1px;width:15px;height:18px;border-left:1px solid #4b4b4b;background:#464646"></div></div>
<div class="hl" style="left:1243px;top:230px;width:242px"></div>
<div class="sec" style="left:1266px;top:240.7px">Align and Distribute</div>
<div class="lbl" style="left:1252px;top:262.4px">Align:</div>
<div class="hl" style="left:1243px;top:344px;width:242px"></div>
<div class="sec" style="left:1266px;top:355.3px">Quick Actions</div>
<div class="btn" style="left:1252px;top:378px">Remove Background</div>
<div class="btn" style="left:1252px;top:409px">Select Subject</div>
<div class="a" style="left:1485px;top:111px;width:13px;height:335px;background:#4e4e4e"></div>
<div class="a" style="left:1487px;top:115px;width:10px;height:298px;background:#6a6a6a;border-radius:5px"></div>

<!-- layers panel -->
<div class="a" style="left:1243px;top:473px;width:257px;height:3px;background:#3a3a3a"></div>
<div id="layers" class="a"></div>
<div class="a" style="left:1243px;top:476px;width:257px;height:29px;background:#474747"></div>
<div class="tab" style="left:1243px;width:55px;padding-left:10px;top:476px">History</div>
<div class="tab on" style="left:1298px;width:53px;padding-left:8px;top:476px">Layers</div>
<div class="tab" style="left:1351px;width:63px;padding-left:9px;top:476px">Channels</div>
<div class="tab" style="left:1414px;width:46px;padding-left:9px;top:476px">Paths</div>
<div class="dd" style="left:1248px;top:515px;width:90px;height:18px;padding-left:21px;line-height:16px">Kind</div>
<div class="hl" style="left:1243px;top:537px"></div>
<div class="dd" style="left:1248px;top:544px;width:135px;height:18px;padding-left:7px;line-height:16px">Multiply</div>
<div class="lbl" style="left:1387px;top:546.6px">Opacity:</div>
<div class="inp" style="left:1432px;top:544px;width:53px;height:18px;line-height:16px">50%<div class="a" style="left:37px;top:-1px;width:15px;height:18px;background:#393939"></div></div>
<div class="hl" style="left:1243px;top:565px"></div>
<div class="lbl" style="left:1249px;top:575.2px">Lock:</div>
<div class="a" style="left:1368px;top:565px;width:123px;height:27px;background:#4d4d4d;border:1px solid #565656;box-shadow:0 1px 2px rgba(0,0,0,.3)"></div>
<div class="a" style="left:1376px;top:576px;width:108px;height:3px;background:#6a6a6a;border-radius:1px"></div>
<div class="a" style="left:1243px;top:597px;width:241px;height:67px;background:#4f4f4f"></div>
<div class="a" style="left:1275px;top:599px;width:209px;height:31px;background:#6a6a6a"></div>
<div class="a" style="left:1243px;top:598px;width:32px;height:32px;background:#535353"></div>
<div class="a" style="left:1243px;top:631px;width:241px;height:32px;background:#535353"></div>
<div class="lbl" style="left:1320.5px;top:609.1px;color:#ececec">Greyscale</div>
<div class="lbl" style="left:1320.5px;top:641.2px;color:#ececec">Background</div>
<div class="a" style="left:1243px;top:663px;width:241px;height:2px;background:#474747"></div>
<div class="a" style="left:1243px;top:665px;width:241px;height:210px;background:#4e4e4e"></div>
<div class="a" style="left:1483px;top:592px;width:2px;height:283px;background:#484848"></div>
<div class="a" style="left:1485px;top:592px;width:13px;height:283px;background:#4e4e4e"></div>
<div class="a" style="left:1498px;top:476px;width:2px;height:399px;background:#494949"></div>
<div class="hl" style="left:1243px;top:875px"></div>
<div class="a" style="left:1243px;top:876px;width:257px;height:24px;background:#555"></div>
<div class="a" style="left:1243px;top:900px;width:257px;height:2px;background:#3a3a3a"></div>
<div class="a" style="left:1243px;top:902px;width:257px;height:8px;background:#535353"></div>
<svg class="a" style="left:0;top:0;z-index:6" width="1500" height="910">
<path d="M1228.5 38L1231 40.3L1228.5 42.6M1232.2 38L1234.7 40.3L1232.2 42.6" stroke="#e0e0e0" stroke-width="1.3" fill="none" transform="translate(2462.7 0) scale(-1 1)"/>
<path d="M1485.2 38L1487.7 40.3L1485.2 42.6M1488.9 38L1491.4 40.3L1488.9 42.6" stroke="#e0e0e0" stroke-width="1.3" fill="none"/>
<path d="M6 38L8.5 40.3L6 42.6M9.7 38L12.2 40.3L9.7 42.6" stroke="#e0e0e0" stroke-width="1.3" fill="none"/>
<rect x="1483.2" y="57.30" width="10.8" height="1.2" fill="#b5b5b5"/><rect x="1483.2" y="59.35" width="10.8" height="1.2" fill="#b5b5b5"/><rect x="1483.2" y="61.40" width="10.8" height="1.2" fill="#b5b5b5"/><rect x="1483.2" y="63.45" width="10.8" height="1.2" fill="#b5b5b5"/>
<rect x="1483.2" y="486.60" width="10.8" height="1.2" fill="#b5b5b5"/><rect x="1483.2" y="488.65" width="10.8" height="1.2" fill="#b5b5b5"/><rect x="1483.2" y="490.70" width="10.8" height="1.2" fill="#b5b5b5"/><rect x="1483.2" y="492.75" width="10.8" height="1.2" fill="#b5b5b5"/>
<rect x="1259.6" y="87.4" width="13.9" height="12.1" fill="#111" stroke="#e8e8e8" stroke-width="1.4"/>
<path d="M1260.3 98.8V96L1262.5 93.6L1264 95L1266 91.8L1268.5 95L1270 93.8L1272.8 96.5V98.8Z" fill="#e8e8e8"/>
<circle cx="1270.6" cy="90.4" r="1.1" fill="#e8e8e8"/>
<path d="M1251 126L1255.5 131L1260 126" stroke="#e6e6e6" stroke-width="1.4" fill="none"/>
<path d="M1251 245.5L1255.5 250.5L1260 245.5" stroke="#e6e6e6" stroke-width="1.4" fill="none"/>
<path d="M1251 360L1255.5 365L1260 360" stroke="#e6e6e6" stroke-width="1.4" fill="none"/>
<rect x="1262.2" y="156.5" width="7.6" height="7.3" rx="3.65" fill="none" stroke="#e8e8e8" stroke-width="1.5"/>
<rect x="1262.2" y="163.8" width="7.6" height="7.3" rx="3.65" fill="none" stroke="#e8e8e8" stroke-width="1.5"/>
<rect x="1264.8" y="159.8" width="2.4" height="8" rx="1.2" fill="#393939" stroke="#e8e8e8" stroke-width="1.1"/>
<path d="M1351 204L1355.0 208L1359 204" stroke="#e0e0e0" stroke-width="1.3" fill="none"/>
<path d="M1283.3 210.3H1296.2M1283.3 210.3L1294.8 200.8M1289.6 205.2Q1292.3 206.8 1292.6 210.3" stroke="#e8e8e8" stroke-width="1.2" fill="none"/>
<path d="M1393.3 201.4L1398.2 205.6L1393.3 209.8Z" fill="none" stroke="#e8e8e8" stroke-width="1.1"/>
<path d="M1409 200.9V210.3L1403.7 205.6Z" fill="#e8e8e8"/>
<path d="M1401 198.5V213" stroke="#e8e8e8" stroke-width="1.1" stroke-dasharray="1.1 0.9"/>
<path d="M1432.6 198.2H1440.6L1436.6 202.4Z" fill="none" stroke="#e8e8e8" stroke-width="1.1"/>
<path d="M1432 213.5H1441.2L1436.6 208.1Z" fill="#e8e8e8"/>
<path d="M1429 205.6H1443.7" stroke="#e8e8e8" stroke-width="1.1" stroke-dasharray="1.1 0.9"/>
<g fill="#9d9d9d">
<rect x="1258.8" y="290" width="1.2" height="16"/><rect x="1261.3" y="293.3" width="6.7" height="4"/><rect x="1261.3" y="300" width="10.7" height="4"/>
<rect x="1295.1" y="290" width="1.2" height="16"/><rect x="1292.4" y="293.3" width="7.2" height="4"/><rect x="1290" y="300" width="11" height="4"/>
<rect x="1331.5" y="290" width="1.2" height="16"/><rect x="1323.3" y="293.3" width="6.7" height="4"/><rect x="1319" y="300" width="11" height="4"/>
<rect x="1366.7" y="292.2" width="14.6" height="1.2"/><rect x="1368.7" y="293.4" width="4" height="11.3"/><rect x="1374.7" y="293.4" width="4.3" height="7.9"/>
<rect x="1396.7" y="298.1" width="14.6" height="1.2"/><rect x="1399" y="292.7" width="4" height="11.3"/><rect x="1405.3" y="294.7" width="4" height="8"/>
<rect x="1426.7" y="303.6" width="15.3" height="1.2"/><rect x="1429.3" y="291.3" width="4" height="12.3"/><rect x="1435.3" y="294.7" width="4" height="8.9"/>
</g>
<g fill="#f0f0f0"><circle cx="1433.3" cy="330.4" r="1.5"/><circle cx="1438.3" cy="330.4" r="1.5"/><circle cx="1443.3" cy="330.4" r="1.5"/></g>
<circle cx="1260.8" cy="522.8" r="3.6" fill="none" stroke="#e8e8e8" stroke-width="1.5"/>
<path d="M1263.5 525.5L1266.8 528.9" stroke="#e8e8e8" stroke-width="1.8"/>
<path d="M1328 523L1331.5 527L1335 523" stroke="#e6e6e6" stroke-width="1.4" fill="none"/>
<rect x="1351.6" y="518.6" width="11.6" height="9.8" fill="none" stroke="#e8e8e8" stroke-width="1.3"/>
<path d="M1353.5 527V525L1355.6 522.6L1357.4 524.6L1359.3 522.6L1361.4 525V527Z" fill="#e8e8e8"/>
<circle cx="1382" cy="523.3" r="5.2" fill="none" stroke="#e8e8e8" stroke-width="1.3"/>
<path d="M1385.7 519.6A5.2 5.2 0 0 1 1378.3 527Z" fill="#e8e8e8"/>
<path d="M1402 518.5H1412V521.5H1411V519.9H1408.2V527.4H1409.8V529H1404.2V527.4H1405.8V519.9H1403V521.5H1402Z" fill="#e8e8e8"/>
<rect x="1427.6" y="519.2" width="9.3" height="9.3" fill="none" stroke="#e8e8e8" stroke-width="1.1"/>
<g fill="#535353" stroke="#e8e8e8" stroke-width="1"><circle cx="1427.6" cy="519.2" r="1.4"/><circle cx="1436.9" cy="519.2" r="1.4"/><circle cx="1427.6" cy="528.5" r="1.4"/><circle cx="1436.9" cy="528.5" r="1.4"/></g>
<path d="M1455.6 519.1H1460.3L1463.2 522V529.6H1455.6Z" fill="none" stroke="#e8e8e8" stroke-width="1.2"/>
<path d="M1460 519.3V522.3H1463" fill="none" stroke="#e8e8e8" stroke-width="1"/>
<rect x="1452.4" y="523.9" width="6.4" height="6.2" fill="#e8e8e8" stroke="#535353" stroke-width="0.8"/>
<rect x="1475.3" y="514.8" width="10.6" height="18.6" rx="5.3" fill="#474747" stroke="#5c5c5c" stroke-width="1"/>
<circle cx="1480.6" cy="519.6" r="4.4" fill="#e0e0e0"/>
<path d="M1372.5 552L1375.75 556L1379 552" stroke="#e6e6e6" stroke-width="1.4" fill="none"/>
<path d="M1473.5 553L1477.0 557L1480.5 553" stroke="#e6e6e6" stroke-width="1.4" fill="none"/>
<rect x="1283" y="576.5" width="11.2" height="11.2" fill="#e8e8e8"/>
<g fill="#2a2a2a"><rect x="1284.4" y="577.9" width="2.8" height="2.8"/><rect x="1290" y="577.9" width="2.8" height="2.8"/><rect x="1287.2" y="580.7" width="2.8" height="2.8"/><rect x="1284.4" y="583.5" width="2.8" height="2.8"/><rect x="1290" y="583.5" width="2.8" height="2.8"/></g>
<path d="M1317.6 575L1319.2 576.3L1311.6 585L1309.8 583.5Z" fill="#e8e8e8"/>
<path d="M1309.2 584C1307.2 584 1305.8 585.4 1305.6 587.2C1305.5 588.3 1305.1 589 1304.9 589.5C1307.6 589.8 1310.5 589 1311.4 587.3C1312.1 586 1311.3 584.7 1309.2 584Z" fill="#e8e8e8"/>
<path d="M1333.8 575.5L1331 578.5H1336.6Z M1333.8 589L1331 586H1336.6Z M1327 582.2L1330 579.4V585Z M1340.5 582.2L1337.5 579.4V585Z" fill="#e8e8e8"/>
<path d="M1328.5 582.2H1339M1333.8 577V587.5" stroke="#e8e8e8" stroke-width="1.3"/>
<path d="M1352.5 578.3H1359.5L1362 580.8V586H1352.5Z" fill="none" stroke="#e8e8e8" stroke-width="1.2"/>
<g fill="#d5d5d5"><rect x="1350" y="576.3" width="1.2" height="1.2"/><rect x="1363.3" y="576.3" width="1.2" height="1.2"/><rect x="1350" y="587.2" width="1.2" height="1.2"/><rect x="1363.3" y="587.2" width="1.2" height="1.2"/></g>
<path d="M1429.5 574.3Q1429.5 572.2 1431 573.2L1435 579.7Q1436 581.8 1434 583.2H1425.2Q1423 581.8 1424.2 579.7Z" fill="#f2f2f2" stroke="#222" stroke-width="1.4" stroke-linejoin="round"/>
<path d="M1253 615Q1259.5 607.8 1266.2 615Q1259.5 622.2 1253 615Z" fill="#e8e8e8"/>
<circle cx="1259.6" cy="615" r="2.3" fill="#444"/>
<path d="M1253 647.3Q1259.5 640.1 1266.2 647.3Q1259.5 654.5 1253 647.3Z" fill="#e8e8e8"/>
<circle cx="1259.6" cy="647.3" r="2.3" fill="#444"/>
<rect x="1279.3" y="603" width="33.3" height="23.6" fill="#111"/>
<rect x="1280.20" y="603.8" width="5.58" height="22" fill="#f4f4f4"/><rect x="1285.48" y="603.8" width="4.19" height="22" fill="#dcdcdc"/><rect x="1289.36" y="603.8" width="3.84" height="22" fill="#c4c4c4"/><rect x="1292.91" y="603.8" width="3.65" height="22" fill="#a9a9a9"/><rect x="1296.26" y="603.8" width="3.69" height="22" fill="#8c8c8c"/><rect x="1299.65" y="603.8" width="3.88" height="22" fill="#666666"/><rect x="1303.23" y="603.8" width="4.46" height="22" fill="#3a3a3a"/><rect x="1307.39" y="603.8" width="5.11" height="22" fill="#0c0c0c"/>
<path d="M1277.6 610.5V601.6H1290M1302 601.6H1314.2V610.5M1314.2 619V628H1302M1290 628H1277.6V619" stroke="#f4f4f4" stroke-width="1.6" fill="none"/>
<rect x="1279.3" y="636" width="33" height="22.2" fill="#e33122" stroke="#28363a" stroke-width="1"/>
<rect x="1456" y="645.6" width="9.6" height="6.6" rx="0.8" fill="none" stroke="#d8d8d8" stroke-width="1.2"/>
<path d="M1457.8 645.6V643.7Q1457.8 641.2 1460.8 641.2Q1463.8 641.2 1463.8 643.7V645.6" fill="none" stroke="#d8d8d8" stroke-width="1.2"/>
<rect x="1460.1" y="648.2" width="1.4" height="1.4" fill="#d8d8d8"/>
<g stroke="#a3a3a3" stroke-width="1.4" fill="none"><rect x="1288" y="885" width="7.5" height="6" rx="3"/><rect x="1294.5" y="885" width="7.5" height="6" rx="3"/></g>
<path d="M1291 888H1299" stroke="#a3a3a3" stroke-width="1.4"/>
<text x="1317.6" y="893.6" font-family="Liberation Sans" font-style="italic" font-size="15" fill="#e8e8e8">fx</text>
<path d="M1328.8 894.3H1333.3L1331 896.6Z" fill="#e8e8e8"/>
<rect x="1345.3" y="882.3" width="13.4" height="10" rx="1" fill="#e8e8e8"/>
<circle cx="1352" cy="887.3" r="2.8" fill="#3a3a3a"/>
<circle cx="1380" cy="887.7" r="5.3" fill="none" stroke="#e8e8e8" stroke-width="1.3"/>
<path d="M1383.8 883.9A5.3 5.3 0 0 1 1376.2 891.5Z" fill="#e8e8e8"/>
<path d="M1385 894.3H1389.5L1387.2 896.6Z" fill="#e8e8e8"/>
<path d="M1401.3 884.8H1414V893H1401.3Z" fill="#dadada"/>
<rect x="1401.3" y="882.3" width="5.5" height="1.8" fill="#bdbdbd"/>
<rect x="1430.6" y="882.3" width="11" height="10.8" fill="none" stroke="#e8e8e8" stroke-width="1.3"/>
<path d="M1436.1 884.9V890.5M1433.3 887.7H1438.9" stroke="#e8e8e8" stroke-width="1.4"/>
<path d="M1458.8 884.2H1469.3M1462.5 884V882H1465.6V884" stroke="#d0d0d0" stroke-width="1.2" fill="none"/>
<path d="M1459.8 885.5H1468.3L1467.4 893.5H1460.7Z" fill="#d0d0d0"/>
<g stroke="#777" stroke-width="0.8"><path d="M1462.2 886.5V892.5M1464 886.5V892.5M1465.8 886.5V892.5"/></g>
<g><rect x="1350.0" y="904.3" width="1" height="3" fill="#474747"/><rect x="1352.0" y="904.3" width="1" height="3" fill="#474747"/><rect x="1354.0" y="904.3" width="1" height="3" fill="#474747"/><rect x="1356.0" y="904.3" width="1" height="3" fill="#474747"/><rect x="1358.0" y="904.3" width="1" height="3" fill="#474747"/><rect x="1360.0" y="904.3" width="1" height="3" fill="#474747"/><rect x="1362.0" y="904.3" width="1" height="3" fill="#474747"/><rect x="1364.0" y="904.3" width="1" height="3" fill="#474747"/><rect x="1366.0" y="904.3" width="1" height="3" fill="#474747"/><rect x="1368.0" y="904.3" width="1" height="3" fill="#474747"/><rect x="1370.0" y="904.3" width="1" height="3" fill="#474747"/><rect x="1372.0" y="904.3" width="1" height="3" fill="#474747"/></g>
</svg>
</body></html>
